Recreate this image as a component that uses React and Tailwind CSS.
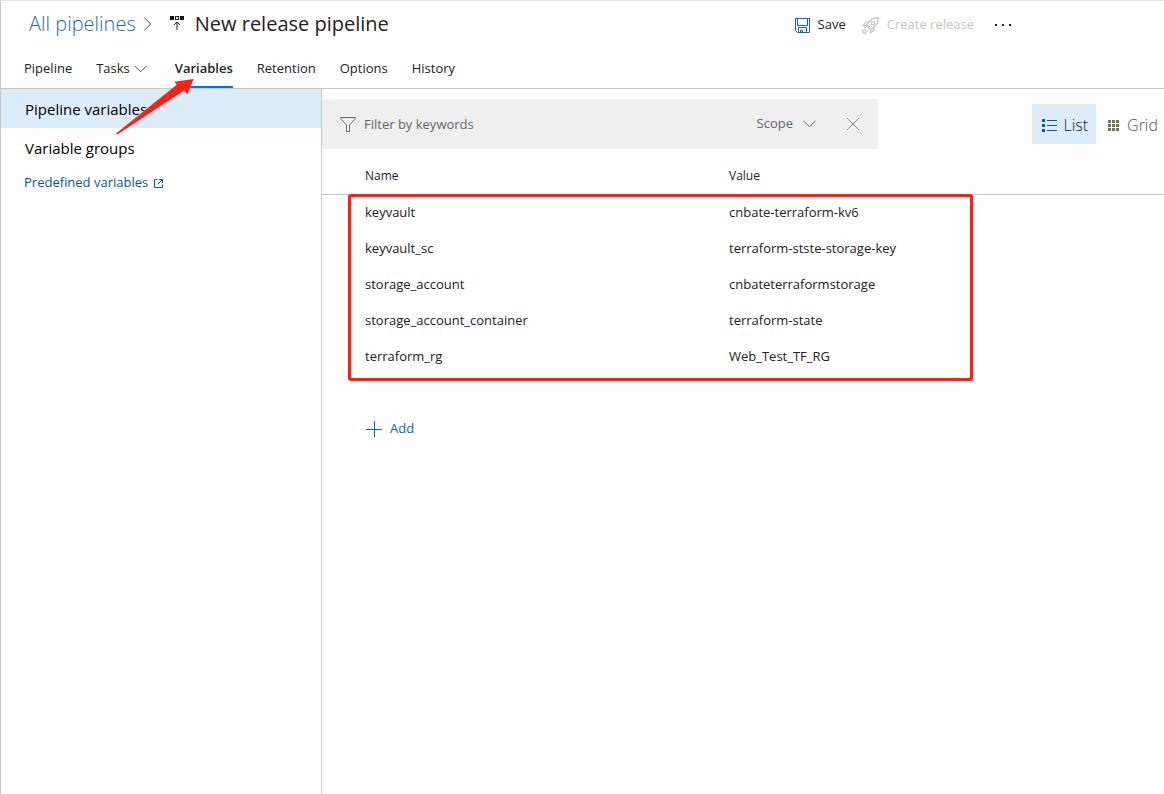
import React, { useState } from 'react';
import clsx from 'clsx';

const TABS = ['Pipeline', 'Tasks', 'Variables', 'Retention', 'Options', 'History'];

const VARIABLES = [
  { name: 'keyvault', value: 'cnbate-terraform-kv6' },
  { name: 'keyvault_sc', value: 'terraform-stste-storage-key' },
  { name: 'storage_account', value: 'cnbateterraformstorage' },
  { name: 'storage_account_container', value: 'terraform-state' },
  { name: 'terraform_rg', value: 'Web_Test_TF_RG' },
];

const ChevronDownIcon = ({ className }) => (
  <svg className={className} width="13" height="8" viewBox="0 0 13 8" fill="none" stroke="currentColor">
    <path d="M0.5 0.8L6.5 6.8L12.5 0.8" />
  </svg>
);

const PipelineIcon = () => (
  <svg width="15" height="16" viewBox="0 0 15 16" fill="none" stroke="#222">
    <path d="M0 0h4v4H0zM10 0h4v4h-4z" fill="#111" stroke="none" />
    <path d="M5.5 0.5h3v3h-3z" strokeWidth="1.2" />
    <path d="M7 14V6M4 9L7 6L10 9" />
  </svg>
);

const SaveIcon = () => (
  <svg width="15" height="15" viewBox="0 0 15 15" fill="none" stroke="#1264b0">
    <path d="M0.5 0.5h14v14H2.5l-2-2z" />
    <path d="M2.5 0.5v7h10v-7M3.5 14.5v-5h8v5M5.5 14.5v-2.5h2v2.5" />
  </svg>
);

const RocketIcon = () => (
  <svg width="17" height="17" viewBox="0 0 17 17" fill="none" stroke="currentColor" strokeWidth="1.2">
    <path d="M16.3 0.7C12 0.7 9.5 2 7 5L4.3 8.5L8.5 12.7L12 10C15 7.5 16.3 5 16.3 0.7Z" />
    <path d="M7 5H4L1.3 8.3L4.3 8.5M12 10V13L8.7 15.7L8.5 12.7" />
    <circle cx="10.8" cy="6.2" r="1.7" />
    <path d="M6.2 8.6L8.4 10.8M3.8 10.2L2.6 11.4M6.8 13.2L5.6 14.4" />
    <circle cx="2.4" cy="14.6" r="1.8" />
  </svg>
);

const FilterIcon = () => (
  <svg width="16" height="15" viewBox="0 0 16 15" fill="none" stroke="#666">
    <path d="M0.5 0.5h15v1L9.5 8v6.5h-3V8L0.5 1.5z" />
  </svg>
);

const ListIcon = () => (
  <svg width="15" height="13" viewBox="0 0 15 13" fill="#005a9e">
    <path d="M0 0h3v3H0zM0 5h3v3H0zM0 10h3v3H0zM5 1h10v1H5zM5 6h10v1H5zM5 11h10v1H5z" />
  </svg>
);

const GridIcon = () => (
  <svg width="11" height="11" viewBox="0 0 11 11" fill="#77705f">
    <path d="M0 0h3v3H0zM4 0h3v3H4zM8 0h3v3H8zM0 4h3v3H0zM4 4h3v3H4zM8 4h3v3H8zM0 8h3v3H0zM4 8h3v3H4zM8 8h3v3H8z" />
  </svg>
);

const Header = () => (
  <header className="flex h-12 items-center pl-7">
    <div className="flex items-center pb-0.5">
      <a href="#pipelines" className="text-xl font-light text-[#2b6a9e]">All pipelines</a>
      <svg className="ml-2" width="8" height="14" viewBox="0 0 8 14" fill="none" stroke="#555">
        <path d="M0.7 1L6.7 7L0.7 13" />
      </svg>
      <div className="ml-[18px] flex items-center gap-2.5">
        <PipelineIcon />
        <h1 className="text-xl text-[#222]">New release pipeline</h1>
      </div>
    </div>
    <div className="ml-auto mr-[148px] flex items-center gap-4 text-[13px]">
      <button className="flex items-center gap-2 text-[#222]">
        <SaveIcon />
        Save
      </button>
      <button className="flex items-center gap-2 text-[#c4c4c4]" disabled>
        <RocketIcon />
        Create release
      </button>
      <button aria-label="More actions" className="px-1 text-[#222]">
        <svg width="18" height="4" viewBox="0 0 18 4" fill="currentColor">
          <path d="M1 1h2v2H1zM8 1h2v2H8zM15 1h2v2h-2z" />
        </svg>
      </button>
    </div>
  </header>
);

const Tabs = ({ active, onChange }) => (
  <nav className="flex h-10 gap-6 border-b border-[#c8c8c8] pl-[23px] text-[13px] text-[#222]">
    {TABS.map((tab) => (
      <div key={tab} className="relative flex">
        <button
          onClick={() => onChange(tab)}
          className={clsx(
            'flex items-center gap-1 border-b-2 pt-0.5',
            tab === 'Tasks' && 'pr-1',
            tab === active ? 'border-[#0078d4] font-semibold' : 'border-transparent'
          )}
        >
          {tab}
          {tab === 'Tasks' && <ChevronDownIcon className="text-[#555]" />}
        </button>
        {/* Arrow pointing at the tab to open */}
        {tab === 'Variables' && (
          <svg className="absolute top-[29px] right-[37px] z-10" width="82" height="58" viewBox="114 78 82 58" fill="#ff2015">
            <path d="M193.7 79L174.3 81.7L176.7 84.8L116 133.5L117 134.8L184 90.5L187.3 94.3Z" />
          </svg>
        )}
      </div>
    ))}
  </nav>
);

const Sidebar = () => (
  <aside className="w-[321px] shrink-0 border-r border-[#c8c8c8]">
    <a href="#variables" className="flex h-[39px] items-center bg-[#deebf9] pl-6 pt-0.5 text-[15px] text-black">
      Pipeline variables
    </a>
    <a href="#groups" className="flex h-10 items-center pl-6 text-[15px] text-black">
      Variable groups
    </a>
    <a href="#predefined" className="mt-[5px] flex h-5 items-center gap-1.5 pl-[23px] text-[13px] text-[#005a9e]">
      Predefined variables
      <svg width="9" height="9" viewBox="0 0 9 9" fill="none" stroke="currentColor">
        <path d="M3.5 0.5h-3v8h8v-3M5 0.5h3.5V4M8.5 0.5L4 5" />
      </svg>
    </a>
  </aside>
);

const Toolbar = ({ view, onViewChange }) => (
  <div className="flex items-center pt-2.5">
    <div className="flex h-[50px] w-[556px] items-center rounded bg-[#efefef] px-[18px] text-[13px] text-[#666]">
      <FilterIcon />
      <input
        type="text"
        aria-label="Filter by keywords"
        placeholder="Filter by keywords"
        className="ml-2 min-w-0 flex-1 bg-transparent pt-0.5 outline-none placeholder:text-[#666]"
      />
      <button className="flex items-center gap-2.5">
        Scope
        <ChevronDownIcon />
      </button>
      <button aria-label="Clear filter" className="ml-[30px]">
        <svg width="14" height="14" viewBox="0 0 14 14" fill="none" stroke="#888">
          <path d="M1 1L13 13M13 1L1 13" />
        </svg>
      </button>
    </div>
    <div className="ml-auto flex text-base font-light">
      <button
        onClick={() => onViewChange('list')}
        className={clsx('flex h-10 items-center gap-1.5 px-2 pt-0.5 pl-2.5 text-[#222]', view === 'list' && 'bg-[#deebf9]')}
      >
        <ListIcon />
        List
      </button>
      <button
        onClick={() => onViewChange('grid')}
        className={clsx('flex h-10 items-center gap-2 pt-0.5 pr-1.5 pl-3 text-[#555]', view === 'grid' && 'bg-[#deebf9]')}
      >
        <GridIcon />
        Grid
      </button>
    </div>
  </div>
);

const VariablesTable = () => (
  <div className="relative">
    <table className="w-full table-fixed border-separate border-spacing-0 text-left text-[13px] text-[#222]">
      <thead>
        <tr className="h-[46px] text-xs">
          <th className="w-[407px] border-b border-[#c8c8c8] pt-2 pl-[43px] font-normal">Name</th>
          <th className="border-b border-[#c8c8c8] pt-2 font-normal">Value</th>
        </tr>
      </thead>
      <tbody>
        {VARIABLES.map((item) => (
          <tr key={item.name} className="h-9">
            <td className="pl-[43px]">{item.name}</td>
            <td>{item.value}</td>
          </tr>
        ))}
      </tbody>
    </table>
    {/* Highlight around the rows */}
    <div className="pointer-events-none absolute top-[45px] -bottom-1.5 left-[26px] w-[625px] rounded-[3px] border-3 border-[#ff2015]" />
  </div>
);

const App = () => {
  const [tab, setTab] = useState('Variables');
  const [view, setView] = useState('list');

  return (
    <div className="flex min-h-screen flex-col border-t border-l border-t-[#e4e4e4] border-l-[#c8c8c8] bg-white font-['Open_Sans',sans-serif]">
      <Header />
      <Tabs active={tab} onChange={setTab} />
      <div className="flex flex-1">
        <Sidebar />
        <main className="min-w-0 flex-1">
          <Toolbar view={view} onViewChange={setView} />
          <VariablesTable />
          <button className="mt-11 ml-11 flex items-center gap-2 text-[13px] text-[#1264b0]">
            <svg width="16" height="16" viewBox="0 0 16 16" fill="none" stroke="currentColor">
              <path d="M8.5 0v16M0 8.5h16" />
            </svg>
            Add
          </button>
        </main>
      </div>
    </div>
  );
};

export default App;
